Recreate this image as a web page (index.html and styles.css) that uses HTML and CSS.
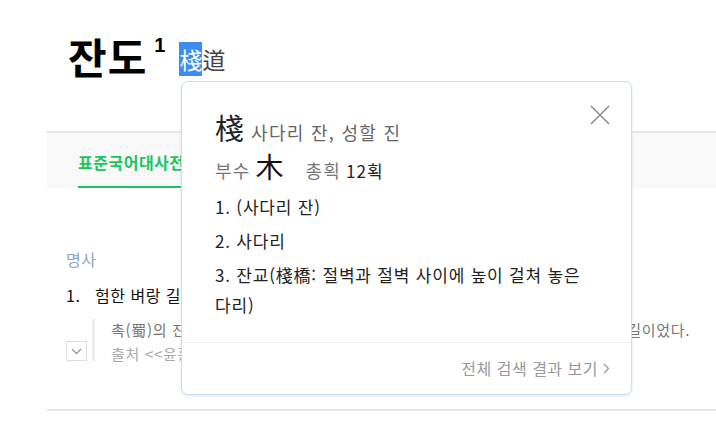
FILE: index.html
```html
<!DOCTYPE html>
<html lang="ko">
  <head>
    <meta charset="UTF-8" />
    <meta name="viewport" content="width=device-width, initial-scale=1.0" />
    <title>잔도 - 표준국어대사전</title>
    <link rel="stylesheet" href="styles.css">
  </head>
  <body>
    <div class="page">
      <div class="entry-head">
        <h1 class="headword">잔도<sup>1</sup></h1>
        <span class="hanja"><span class="picked">棧</span>道</span>
      </div>

      <div class="tabs">
        <a class="tab active" href="#">표준국어대사전</a>
      </div>

      <div class="entry-body">
        <div class="pos">명사</div>
        <div class="sense">
          <span class="num">1.</span>
          <span class="def">험한 벼랑 길에 선반을 매달듯이 하여 낸 길.</span>
        </div>
        <div class="example-row">
          <button class="toggle" type="button">
            <svg width="11" height="7" viewBox="0 0 11 7"><path d="M1 1l4.5 4.5L10 1" fill="none" stroke="#999" stroke-width="1.3"/></svg>
          </button>
          <div class="example">
            <p class="ex-text">촉(蜀)의 잔도는 깎아지른 절벽 허리에 나무를 박아 놓은 아주 몹시 아슬아슬한 길이었다.</p>
            <p class="ex-src">출처 &lt;&lt;윤흥길, 완장&gt;&gt;</p>
          </div>
        </div>
      </div>

      <div class="popup">
        <div class="popup-body">
          <button class="close" type="button">
            <svg width="20" height="20" viewBox="0 0 20 20"><path d="M1 1l18 18M19 1L1 19" stroke="#888" stroke-width="1.4"/></svg>
          </button>
          <div class="char-title">
            <span class="char">棧</span>
            <span class="char-read">사다리 잔, 성할 진</span>
          </div>
          <div class="char-info">
            <span class="label">부수</span>
            <span class="radical">木</span>
            <span class="label strokes">총획</span>
            <span class="count">12획</span>
          </div>
          <ol class="meanings">
            <li>1. (사다리 잔)</li>
            <li>2. 사다리</li>
            <li>3. 잔교(棧橋: 절벽과 절벽 사이에 높이 걸쳐 놓은 다리)</li>
          </ol>
        </div>
        <div class="popup-foot">
          <a class="more" href="#">전체 검색 결과 보기
            <svg width="7" height="11" viewBox="0 0 7 11"><path d="M1 1l4.5 4.5L1 10" fill="none" stroke="#999" stroke-width="1.2"/></svg>
          </a>
        </div>
      </div>
    </div>
  </body>
</html>
```

FILE: styles.css
```css
body {
    margin: 0;
    font-family: "Noto Sans CJK KR", "Noto Sans", sans-serif;
    color: #222;
    background-color: #fff;
}
.page {
    position: relative;
    padding-left: 47px;
    height: 426px;
    overflow: hidden;
}
.entry-head {
    display: flex;
    align-items: flex-end;
    padding: 28px 0 0 21px;
    height: 54px;
}
.headword {
    margin: 0;
    font-size: 42px;
    font-weight: bold;
    line-height: 56px;
    color: #000;
    letter-spacing: 1px;
    margin-bottom: -2px;
}
.headword sup {
    font-family: "Liberation Sans", sans-serif;
    font-size: 20px;
    vertical-align: 22px;
    margin-left: 7px;
}
.hanja {
    font-size: 23px;
    line-height: 30px;
    margin: 0 0 8px 13px;
    color: #444;
}
.picked {
    background-color: #3b8ef0;
    color: #fff;
}
.tabs {
    margin-top: 49px;
    border-top: 2px solid #e4e4e4;
    background-color: #f9f9f9;
    height: 55px;
    padding-left: 31px;
}
.tab {
    display: inline-block;
    height: 53px;
    line-height: 58px;
    font-size: 16px;
    font-weight: bold;
    letter-spacing: 0.5px;
    color: #19c660;
    text-decoration: none;
    border-bottom: 2px solid #19c660;
    width: 160px;
}
.entry-body {
    padding: 59px 0 0 19px;
    height: 162px;
    border-bottom: 2px solid #e6e6e6;
}
.pos {
    font-size: 16px;
    letter-spacing: 0.5px;
    color: #8aa4c8;
    line-height: 24px;
}
.sense {
    display: flex;
    margin-top: 12px;
    font-size: 16px;
    letter-spacing: 0.5px;
    line-height: 24px;
    color: #111;
}
.num {
    width: 29px;
}
.example-row {
    display: flex;
    align-items: flex-end;
    margin-top: 12px;
}
.toggle {
    flex: none;
    width: 21px;
    height: 20px;
    padding: 0;
    margin: 0 5px 0 0;
    border: 1px solid #dcdcdc;
    background-color: #fff;
    display: flex;
    align-items: center;
    justify-content: center;
}
.example {
    flex: none;
    border-left: 3px solid #ececec;
    padding-left: 16px;
    height: 42px;
}
.example p {
    margin: 0;
    font-size: 15px;
    letter-spacing: 0.7px;
    white-space: nowrap;
}
.ex-text {
    color: #777;
    line-height: 22px;
}
.ex-src {
    color: #aaa;
    line-height: 26px;
}
.popup {
    position: absolute;
    left: 181px;
    top: 81px;
    width: 449px;
    height: 312px;
    background-color: #fff;
    border: 1px solid #c7def7;
    border-radius: 7px;
    box-shadow: 0 1px 3px rgba(120, 160, 210, 0.25);
}
.popup-body {
    position: relative;
    padding: 24px 30px 22px 33px;
    border-bottom: 1px solid #f1f1f1;
}
.close {
    position: absolute;
    right: 21px;
    top: 23px;
    padding: 0;
    border: none;
    background: none;
    width: 20px;
    height: 20px;
}
.char-title {
    display: flex;
    align-items: baseline;
    height: 34px;
}
.char {
    font-size: 29px;
    color: #222;
    margin-right: 7px;
}
.char-read {
    font-size: 18px;
    letter-spacing: 1.3px;
    color: #666;
}
.char-info {
    display: flex;
    align-items: baseline;
    margin-top: 6px;
    height: 36px;
}
.label {
    font-size: 18px;
    letter-spacing: 1.2px;
    color: #777;
}
.radical {
    font-size: 28px;
    color: #111;
    margin: 0 22px 0 5px;
}
.count {
    font-size: 17px;
    letter-spacing: 1px;
    color: #222;
    margin-left: 5px;
}
.meanings {
    list-style: none;
    margin: 10px 0 0 0;
    padding: 0;
    font-size: 17px;
    letter-spacing: 0.8px;
    line-height: 30px;
    color: #222;
}
.meanings li {
    margin-bottom: 4px;
}
.meanings li:last-child {
    margin-bottom: 0;
}
.popup-foot {
    display: flex;
    justify-content: flex-end;
    padding: 12px 21px 0 0;
}
.more {
    display: flex;
    align-items: center;
    gap: 5px;
    font-size: 16px;
    letter-spacing: 0.5px;
    line-height: 26px;
    color: #999;
    text-decoration: none;
}
```
